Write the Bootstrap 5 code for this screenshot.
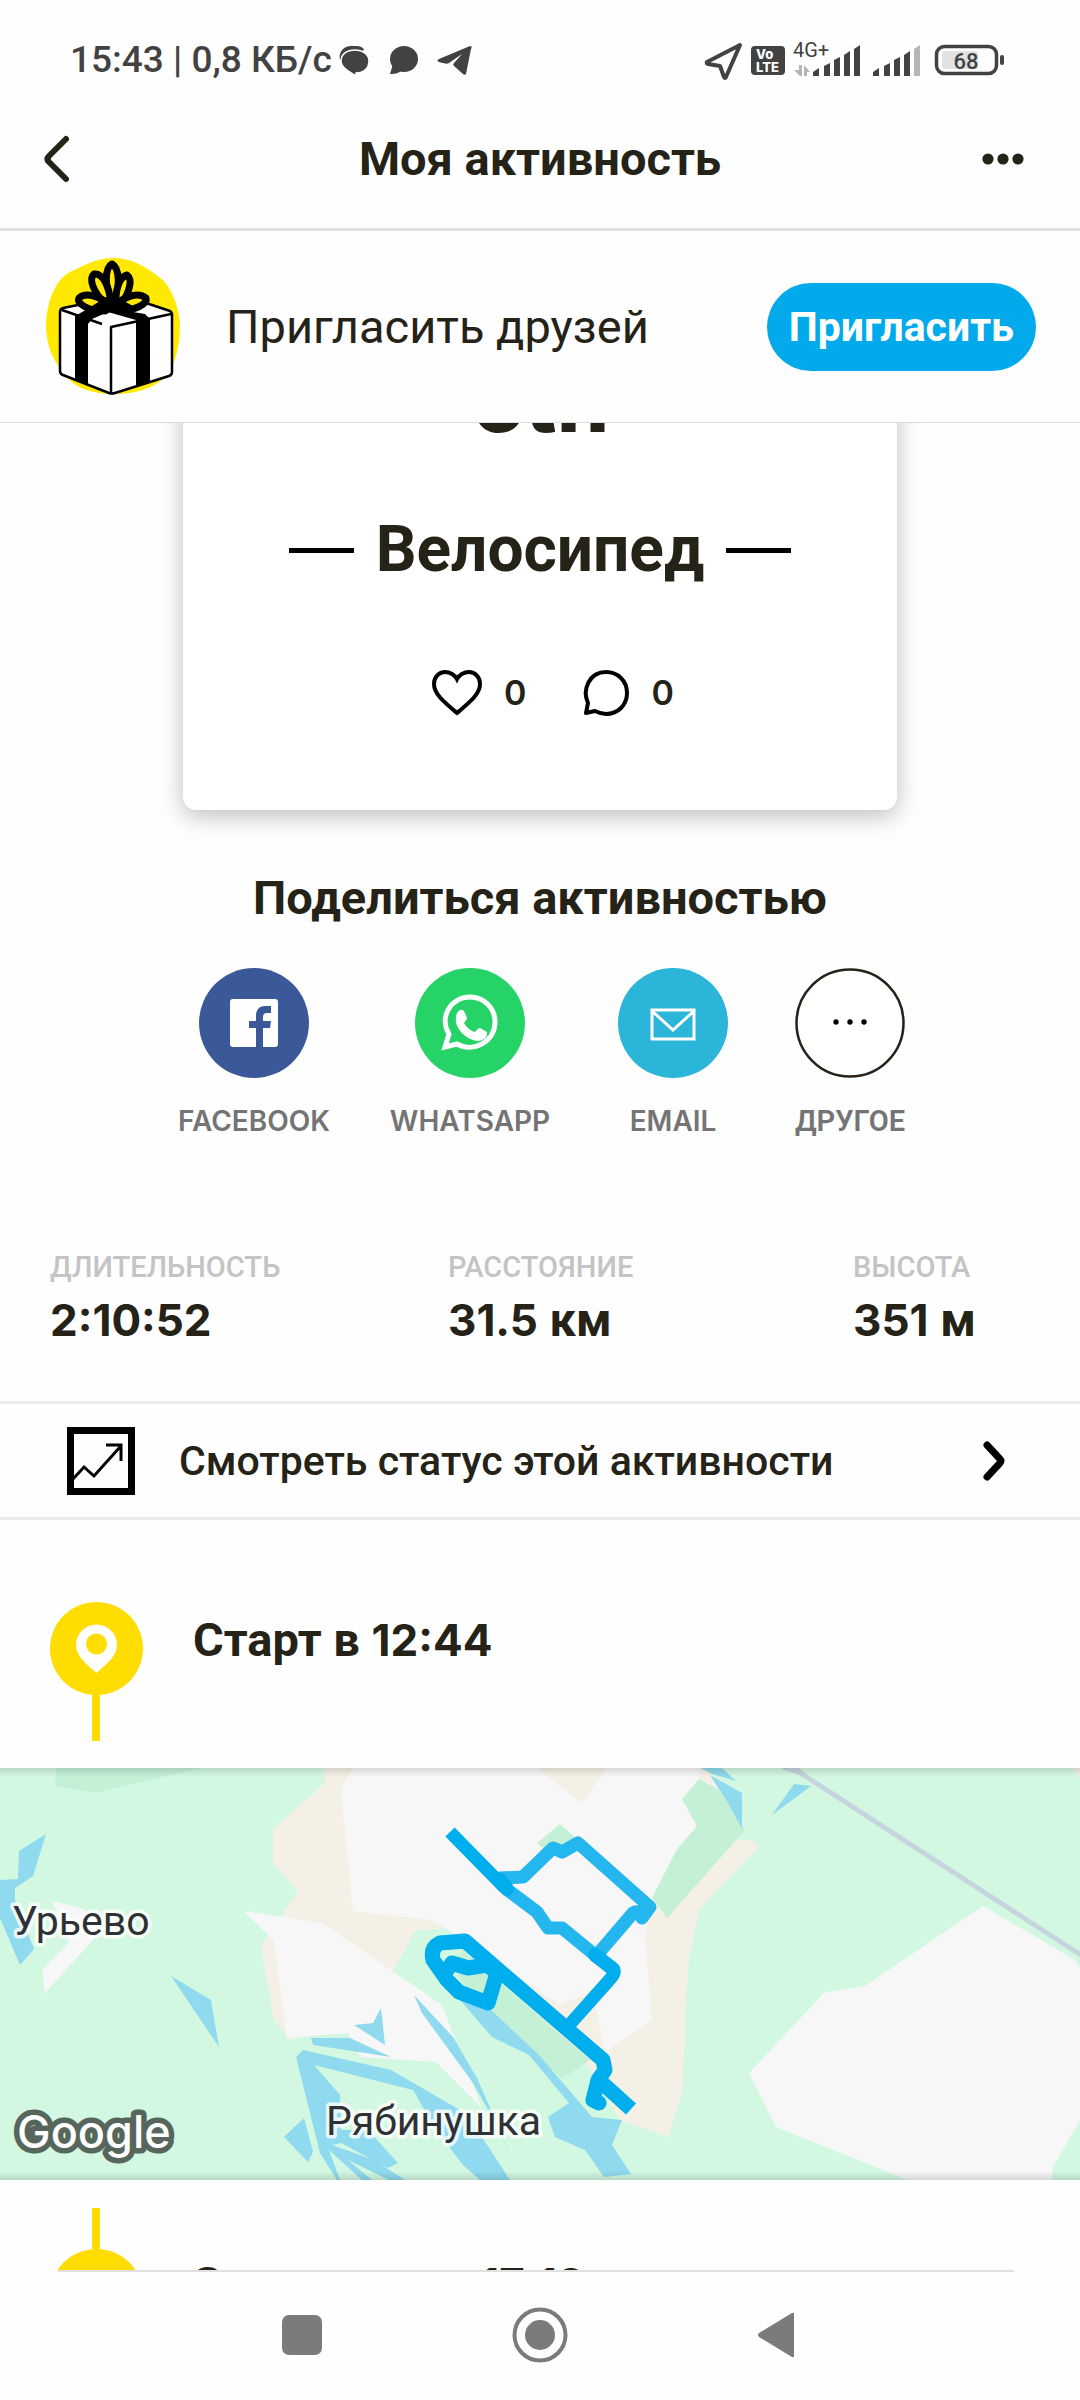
<!DOCTYPE html>
<html lang="ru">
<head>
<meta charset="utf-8">
<meta name="viewport" content="width=device-width, initial-scale=1">
<title>Моя активность</title>
<link rel="stylesheet" href="https://cdn.jsdelivr.net/npm/bootstrap@5.3.0/dist/css/bootstrap.min.css">
<style>
:root{--ink:#252217;--num:Inter,"Noto Sans",sans-serif}
body{font-family:Roboto,"Noto Sans",sans-serif;color:var(--ink);background:#fefefe;line-height:1.2}
svg{display:block;flex:none;overflow:visible}
a{color:inherit;text-decoration:none}
.plain{border:0;background:none;padding:0;color:inherit;font-weight:inherit}
.med{font-weight:500}
.sysbar{height:118px;padding:3px 76px 0 70px;color:#424242;font-size:37px;font-weight:500}
.titlebar{height:113px;padding:0 54px 28px 44px;border-bottom:3px solid #e0e0e0}
.side{width:44px}
.side-back{width:54px}
.t46{font-size:47px;line-height:54px}
.t46 .num{font-size:44px}
.t41{font-size:41px;line-height:48px}
.t29{font-size:29px;line-height:34px}
.num{font-family:var(--num)}
.invite{height:192px;padding:0 44px 0 46px;border-bottom:1px solid #dcdcdc}
.invite-label{margin-left:46px}
.btn-invite{height:88px;border-radius:44px;padding:0 21px;background:#02aaec;color:#fff}
.btn-invite:hover{background:#0298d3;color:#fff}
.feed{min-height:0}
.sheet{width:66.2%;margin-top:-80px;padding:0 0 92px;border-radius:13px;background:#fff;box-shadow:0 6px 24px rgba(0,0,0,.26)}
.rank{font:800 82px/98px var(--num);padding-top:11px}
.sport{font-size:64px;line-height:76px;margin-top:60px;gap:22px}
.rule{width:65px;height:5px;background:#000}
.react{margin-top:80px;gap:57px;font-size:34px;line-height:50px;padding-left:26px}
.react .plain{gap:22px}
.share-title{margin-top:61px}
.share{gap:48px;margin-top:43px;color:#747474;font-size:28px;line-height:34px}
.share .plain{gap:26px}
.other{font-family:Roboto,sans-serif}
.disc{width:110px;height:110px;border-radius:50%}
.w1{width:166px}.w2{width:170px}.w3{width:140px}.w4{width:118px}
.stats{padding:112px 50px 54px}
.stats>div:nth-child(1){width:398px}
.stats>div:nth-child(2){width:405px}
.cap{color:#c4c4c4}
.val{margin-top:9px}
.statusrow{border-top:3px solid #ebebeb;border-bottom:3px solid #ebebeb;height:119px;padding:0 74px 0 67px;gap:44px}
.stop{padding:0 50px;gap:50px}
.stop-start{padding-top:82px}
.stop-start .t46{padding-top:11px}
.stop-end{padding-top:28px}
.stop-end .t46{padding-top:49px}
.map{height:412px;position:relative}
.map svg{width:100%;height:100%;overflow:hidden}
.map::after{content:"";position:absolute;inset:0;background:linear-gradient(rgba(0,0,0,.13),transparent 9px,transparent 403px,rgba(0,0,0,.13))}
.navline{margin:0 66px 0 58px;height:2px;background:#e0e0e0}
.sysnav{height:128px;padding:0 283px 2px 282px}
</style>
</head>
<body>
<div class="vh-100 d-flex flex-column overflow-hidden">
  <div class="sysbar d-flex align-items-center justify-content-between flex-shrink-0">
    <div class="d-flex align-items-center">
      <span>15:43 | 0,8 КБ/с</span>
      <svg class="ms-1" width="134" height="30" viewBox="336 45 134 30" fill="#424242">
        <path d="M340 60c-2-8 4-14 11-14h5c4 0 7 1 8 4z"/>
        <path d="M355 50c8 0 14 5 14 11 0 7-5 12-13 12v3c-8-5-15-9-15-15 0-7 6-11 14-11z" stroke="#fefefe" stroke-width="1.500"/>
        <ellipse cx="404" cy="59" rx="14" ry="13"/><path d="M393 64l-3 10c6 0 9-1 12-4z"/>
        <path d="M439 62c-2-1-2-2 0-3l31-13c2 0 2 1 1 3l-5 25c-1 1-2 1-3 0l-9-8c-1-1-1-2 0-3l8-9-13 9c-2 1-3 1-10-1z"/>
      </svg>
    </div>
    <svg width="299" height="38" viewBox="705 41 299 38" fill="#424242">
      <path d="M740 44l-33 17q-1 1 1 2l12 2 4 11q1 2 2 0z" fill="none" stroke="#424242" stroke-width="4" stroke-linejoin="round"/>
      <rect x="751" y="45" width="34" height="29" rx="4"/>
      <text x="756" y="58" font-size="13" font-weight="800" font-family="Inter" fill="#fff">Vo</text>
      <text x="756" y="71" font-size="13" font-weight="800" font-family="Inter" fill="#fff">LTE</text>
      <text x="793" y="56" font-size="20" font-weight="400">4G+</text>
      <path d="M794 69h5v-5h3v11h-2zM804 75V64l6 7h-3v4z" fill="#b5b5b5"/>
      <path d="M813 75v-4l6-4v8zM824 75V65l6-3v13zM834 75V59l6-3v19zM844 75V54l6-4v25zM854 75V48l6-4v31zM873 75v-4l6-4v8zM884 75V65l6-3v13zM894 75V59l6-3v19zM904 75V54l6-4v25z"/>
      <path d="M914 75V48l6-4v31z" fill="#b5b5b5"/>
      <rect x="936.500" y="45.500" width="60" height="27" rx="8" fill="none" stroke="#424242" stroke-width="3.500"/>
      <rect x="942" y="50" width="36" height="18" rx="3" fill="#e2e2e2"/><rect x="1000" y="54" width="4" height="10" rx="2"/>
      <text x="966" y="68" text-anchor="middle" font-size="22" font-weight="500">68</text>
    </svg>
  </div>

  <header class="titlebar d-flex align-items-center justify-content-between flex-shrink-0">
    <button class="plain side-back" aria-label="Назад"><svg width="26" height="46" viewBox="0 0 26 46" fill="none" stroke="#252217" stroke-width="6" stroke-linecap="round" stroke-linejoin="round"><path d="M22 3L5 20q-3 3 0 6l17 17"/></svg></button>
    <h1 class="t46 fw-bold m-0">Моя активность</h1>
    <button class="plain side" aria-label="Ещё"><svg width="44" height="12" viewBox="0 0 44 12" fill="#252217"><circle cx="6" cy="6" r="5.600"/><circle cx="21" cy="6" r="5.600"/><circle cx="36" cy="6" r="5.600"/></svg></button>
  </header>

  <section class="invite d-flex align-items-center flex-shrink-0">
    <svg width="134" height="138" viewBox="46 258 134 138" stroke-linejoin="round">
      <path d="M46 325c1-22 8-44 24-53 12-5 25-14 43-14s32 8 46 19c12 8 20 30 21 48 0 21-5 42-15 52-12 12-31 17-50 17-20 0-37-4-47-16-14-14-22-32-22-53z" fill="#ffe900"/>
      <path d="M60 312q0-3 3-4l25-5h58l24 8q2 1 2 4v57q0 3-3 4l-54 17q-3 1-6 0l-46-18q-3-1-3-4z" fill="#fff" stroke="#000" stroke-width="2.500"/>
      <path d="M62 310l40 14M111 393v-66l60-13" fill="none" stroke="#000" stroke-width="2.500"/>
      <path d="M75 316l16-9 24 2 30 5 5 5v63l-14 4v-66l-28-8-16 7-4 5v61l-13-5z"/>
      <g fill="#ffe900" stroke="#000" stroke-width="7"><path d="M112 306c-7-18-8-38 0-42 8 4 8 24 2 42z"/><path d="M107 305c-13-11-19-26-13-31 9-1 15 12 17 29z"/><path d="M116 305c-1-14 3-28 11-30 7 5 1 20-7 31z"/><path d="M105 311c-16 0-29-7-26-13 6-6 21-3 32 9z"/><path d="M118 311c16 0 30-7 28-13-7-6-21-3-32 9z"/></g>
      <path d="M92 306l19-12 22 12-6 8-15-2-15 2z"/>
    </svg>
    <span class="invite-label t46 flex-grow-1">Пригласить друзей</span>
    <button class="btn btn-invite t41 fw-bold">Пригласить</button>
  </section>

  <main class="feed flex-grow-1 overflow-hidden">
    <article class="sheet mx-auto text-center">
      <div class="rank">6th</div>
      <h2 class="sport fw-bold d-flex justify-content-center align-items-center mb-0"><span class="rule"></span>Велосипед<span class="rule"></span></h2>
      <div class="react d-flex justify-content-center num fw-semibold">
        <button class="plain d-flex align-items-center"><svg width="50" height="46" viewBox="0 0 50 46" fill="none" stroke="#000" stroke-width="4"><path d="M25 43C12 32 2 24 2 14 2 7 7 2 13 2c5 0 10 3 12 7 2-4 7-7 12-7 6 0 11 5 11 12 0 10-10 18-23 29z"/></svg>0</button>
        <button class="plain d-flex align-items-center"><svg width="46" height="46" viewBox="0 0 46 46" fill="none" stroke="#000" stroke-width="4" stroke-linejoin="round"><path d="M3 43l2-10C-1 20 6 2 23 2c12 0 21 9 21 21S35 44 23 44c-5 0-7-1-11-3z"/></svg>0</button>
      </div>
    </article>

    <h2 class="share-title t46 fw-bold text-center mb-0">Поделиться активностью</h2>
    <div class="share d-flex justify-content-center num fw-semibold">
      <button class="plain w1 d-flex flex-column align-items-center">
        <svg class="disc" viewBox="0 0 110 110"><circle cx="55" cy="55" r="55" fill="#3b5998"/><rect x="31" y="31" width="48" height="48" rx="3" fill="#fff"/><path d="M57 79V60h-7v-7h7v-5c0-7 4-10 9-10h6v7h-4c-3 0-4 2-4 4v4h8l-1 7h-7v19z" fill="#3b5998"/></svg>FACEBOOK</button>
      <button class="plain w2 d-flex flex-column align-items-center">
        <svg class="disc" viewBox="0 0 110 110"><circle cx="55" cy="55" r="55" fill="#25d366"/><path d="M30 79l4-13c-10-16 1-37 21-37 14 0 25 11 25 25 0 20-22 31-38 22z" fill="none" stroke="#fff" stroke-width="5"/><path d="M45 42c2-1 4 0 5 3l2 5c0 2-2 3-3 5 3 5 7 8 11 9 2-2 3-4 5-4l7 4c1 7-6 9-9 9-12-1-24-13-22-24 0-3 2-6 4-7z" fill="#fff"/></svg>WHATSAPP</button>
      <button class="plain w3 d-flex flex-column align-items-center">
        <svg class="disc" viewBox="0 0 110 110"><circle cx="55" cy="55" r="55" fill="#2bb5d8"/><path d="M34 42h42v29H34zM34 43l21 19 21-19" fill="none" stroke="#fff" stroke-width="3"/></svg>EMAIL</button>
      <button class="plain w4 d-flex flex-column align-items-center">
        <svg class="disc" viewBox="0 0 110 110"><circle cx="55" cy="55" r="53.500" fill="#fff" stroke="#252217" stroke-width="2.500"/><circle cx="41" cy="54" r="2.700"/><circle cx="55" cy="54" r="2.700"/><circle cx="69" cy="54" r="2.700"/></svg><span class="other t29">ДРУГОЕ</span></button>
    </div>

    <div class="stats d-flex">
      <div><div class="cap t29 med">ДЛИТЕЛЬНОСТЬ</div><div class="val t46 fw-bold"><span class="num">2:10:52</span></div></div>
      <div><div class="cap t29 med">РАССТОЯНИЕ</div><div class="val t46 fw-bold"><span class="num">31.5</span> км</div></div>
      <div><div class="cap t29 med">ВЫСОТА</div><div class="val t46 fw-bold"><span class="num">351</span> м</div></div>
    </div>

    <a href="#" class="statusrow d-flex align-items-center t41 med">
      <svg width="68" height="68" viewBox="0 0 68 68" fill="none" stroke="#000"><rect x="3.500" y="3.500" width="61" height="61" stroke-width="7"/><path d="M6 52l11-12 10 9 26-29M39 18h15v16" stroke-width="3"/></svg>
      <span class="flex-grow-1">Смотреть статус этой активности</span>
      <svg width="23" height="40" viewBox="0 0 23 40" fill="none" stroke="#000" stroke-width="7" stroke-linecap="round" stroke-linejoin="round"><path d="M4 4l13 14q2 2 0 4L4 36"/></svg>
    </a>

    <div class="stop stop-start d-flex">
      <svg width="93" height="166" viewBox="0 0 93 166"><path d="M42 90h8v49h-8z" fill="#fd0"/><circle cx="46.500" cy="46.500" r="46.500" fill="#fd0"/><path d="M46.500 71C34 60 26 53 26 43a20.500 20.500 0 0 1 41 0c0 10-8 17-20.500 28z" fill="#fff"/><circle cx="46.500" cy="42" r="10.500" fill="#fd0"/></svg>
      <div class="t46 fw-bold">Старт в <span class="num">12:44</span></div>
    </div>

    <div class="map">
      <svg viewBox="0 0 1080 412" preserveAspectRatio="xMidYMid slice">
        <path fill="#d3f8e2" d="M0 0h1080v412H0z"/>
        <path fill="#c4f1d6" d="M56 0l-1 18 40 7L201 0z"/>
        <path fill="#f4f0e5" d="M323 0l2 15-52 46v34l25 28-16 24-21 31 13 74 17 20 12-4 91-66 21-39 35-3 140 140 30 52 48 17 15-47 3-93 3-39 11-50 59-61-7-7-17-50L701 0zM1072 0h8v10z"/>
        <path fill="#d3f8e2" d="M394 202l21-39 33-3 112 149 14-9 30 52-100 60-62-175z"/>
        <path fill="#f7f7f7" d="M352 0l-11 22 12 121 79 9 16 10 112 75 33-13 12 60 47-32-7-82 7-40 45-72-15-27 17-20 2-11z"/>
        <path fill="#f4f0e5" d="M540 2l42 33 24-35h-66z"/>
        <path fill="#f7f7f7" d="M244 143l78 12 120 82 16 42 24 61-46-46-76-5-12-24-61 5-13-97zM52 133l29 7 19 14-7 18-48 53-3-23 27-27zM983 138l92 54 5 8v152l-27 47-1 13H908l-132-53-27-54 75-80 41-7z"/>
        <path fill="#d3f8e2" d="M726 15l20 46-10 11 24 0 0-72h-38z"/>
        <path fill="#c4f1d6" d="M699 11l-17 20 15 27-20 23-25 49 15 20 79-89-5-6-22-33zM537 75l23-19 20 18-27 14zM450 195l14-12 126 109-28 19-82-71z"/>
        <g fill="#8fdaee">
          <path d="M46 66L19 83l-1 28-18 1v38l20 47 14-16-19-49v-12l18-12zM171 208l40 24 8 47zM381 240l-8 15-19 2 31 20zM311 270h39l41 19-78-12z"/>
          <path d="M414 227l39 42 24 41 14 32 24 58-14-35-28-50-51-70z"/>
          <path d="M303 282l88 20 69 40 22 27 28 43h-30l-17-15-29-38-21-37-99-25 26 30 1 35h27l30 33-10 5-47-25-9 2 42 15 31 20h-16l-41-20 24 20h-10l-33-30 11 30h-3l-17-27-24-96zM284 369l20-19 9 34-5 10z"/>
          <path d="M460 232l32 37 37 18 40 48-21 14 7 20 30 13 19 27 27-3-19-29 10-25-30-3-53-62-49-46zM701 0h21l14 13-24-7zM710 7l32 18v36l-13-24zM794 16l17 2-39 29z"/>
        </g>
        <path d="M783-1l16 5 285 185M797 0l3 5" fill="none" stroke="#c6d4dd" stroke-width="5"/>
        <g fill="none" stroke-linejoin="round">
          <path d="M500 110l23-1 30-29 9 4 16-9 72 64-8 11q-3-9-9-5l-36 42" stroke="#24b6ef" stroke-width="13" stroke-linecap="round"/>
          <path d="M505 120l32 24 11 16h14l33 27" stroke="#24b6ef" stroke-width="13"/>
          <path d="M450 64l55 56M595 187l15 12q8 3 1 11l-40 45" stroke="#00aded" stroke-width="13"/><path d="M500 112l7 9M595 187l18 14" stroke="#00aded" stroke-width="14" stroke-linecap="round"/>
          <path d="M465 173l-25 2q-10 5-7 17l14 20 12 12 29 11 9-30-10-8-19 3-16-5-7 10M465 173l138 119 2 10-7 10-5 20 6 3" stroke="#00aded" stroke-width="15" stroke-linecap="round"/>
          <path d="M600 313l31 28" stroke="#00aded" stroke-width="15"/>
        </g>
        <g font-size="41" fill="#303134" stroke="#fff" stroke-opacity=".8" stroke-width="7" stroke-linejoin="round" paint-order="stroke"><text x="12" y="167">Урьево</text><text x="326" y="367">Рябинушка</text></g>
        <text x="17" y="380" font-family="Inter" font-size="45" font-weight="500" fill="#fff" stroke="#56665c" stroke-width="11" stroke-linejoin="round" paint-order="stroke">Google</text>
      </svg>
    </div>

    <div class="stop stop-end d-flex">
      <svg width="93" height="135" viewBox="0 0 93 135" fill="#fd0"><path d="M42 0h8v50h-8z"/><circle cx="46.500" cy="87.500" r="46.500"/></svg>
      <div class="t46 fw-bold">Закончено в <span class="num">17:19</span></div>
    </div>
  </main>

  <div class="navline flex-shrink-0"></div>
  <nav class="sysnav d-flex align-items-center justify-content-between flex-shrink-0">
    <button class="plain" aria-label="Недавние"><svg width="40" height="40"><rect width="40" height="40" rx="7" fill="#7b7b7b"/></svg></button>
    <button class="plain" aria-label="Домой"><svg width="56" height="56"><circle cx="28" cy="28" r="25.500" fill="none" stroke="#7b7b7b" stroke-width="4"/><circle cx="28" cy="28" r="15" fill="#7b7b7b"/></svg></button>
    <button class="plain" aria-label="Назад"><svg width="40" height="46" viewBox="0 0 40 46" fill="#7b7b7b"><path d="M35 1q2-1 2 1v42q0 2-2 1L2 25q-2-2 0-4z"/></svg></button>
  </nav>
</div>
<script src="https://cdn.jsdelivr.net/npm/bootstrap@5.3.0/dist/js/bootstrap.bundle.min.js"></script>
</body>
</html>
